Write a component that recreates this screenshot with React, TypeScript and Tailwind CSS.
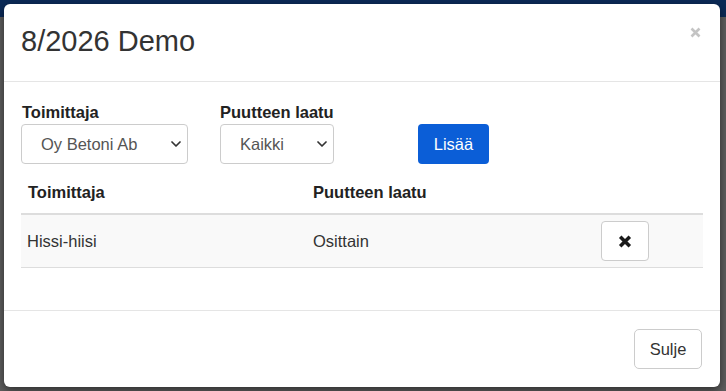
import React from "react";

function Chevron() {
  return (
    <svg width="10" height="6" viewBox="0 0 10 6" fill="none" className="shrink-0">
      <path d="M1 1l4 4 4-4" stroke="#333" strokeWidth="1.7" strokeLinecap="round" strokeLinejoin="round" />
    </svg>
  );
}

function FakeSelect({ value, width }: { value: string; width: string }) {
  return (
    <div
      className={`${width} flex h-[40px] items-center justify-between rounded-[4px] border border-[#cccccc] bg-white pl-[19px] pr-[6px] text-[16.5px] text-[#555555]`}
    >
      <span className="leading-[22px]">{value}</span>
      <Chevron />
    </div>
  );
}

export default function App() {
  return (
    <div
      className="h-[391px] w-[726px] overflow-hidden bg-[linear-gradient(to_bottom,#0b2a57_0px,#0b2a57_17px,#5d5d5d_17px,#5d5d5d_100%)] pl-[4px] pt-[4px]"
      style={{ fontFamily: '"Liberation Sans", Arial, sans-serif' }}
    >
      <div className="flex h-[383px] w-[716px] flex-col rounded-[6px] bg-white shadow-[0_3px_9px_rgba(0,0,0,0.5)]">
        {/* Header */}
        <div className="flex h-[78px] shrink-0 items-start justify-between border-b border-[#e5e5e5] pl-[17px] pr-[19px]">
          <h4 className="mt-[22px] text-[29px] font-normal leading-[31px] text-[#333333]">8/2026 Demo</h4>
          <svg width="11" height="11" viewBox="0 0 11 11" className="mt-[23px]">
            <path d="M1.5 1.5l8 8M9.5 1.5l-8 8" stroke="#c4c4c4" strokeWidth="2.6" />
          </svg>
        </div>

        {/* Body */}
        <div className="px-[17px] pb-[42px] pt-[19px] text-[#333333]">
          <div className="flex items-end">
            <div className="flex flex-col">
              <label className="mb-[1px] pl-[1px] text-[16.5px] font-bold leading-[22px] text-[#222222]">Toimittaja</label>
              <FakeSelect value="Oy Betoni Ab" width="w-[167px]" />
            </div>
            <div className="ml-[32px] flex flex-col">
              <label className="mb-[1px] text-[16.5px] font-bold leading-[22px] text-[#222222]">Puutteen laatu</label>
              <FakeSelect value="Kaikki" width="w-[114px]" />
            </div>
            <button className="ml-[84px] h-[40px] w-[71px] rounded-[4px] bg-[#0b5ed7] text-[16.5px] text-white">
              Lisää
            </button>
          </div>

          <div className="mt-[8px]">
            <div className="grid h-[43px] grid-cols-[285px_288px_1fr] items-center border-b-2 border-[#dddddd] text-[16.5px] font-bold text-[#222222]">
              <div className="pl-[7px]">Toimittaja</div>
              <div className="pl-[7px]">Puutteen laatu</div>
              <div />
            </div>
            <div className="grid h-[53px] grid-cols-[285px_288px_1fr] items-center border-b border-[#dddddd] bg-[#f9f9f9] text-[16.5px] text-[#333333]">
              <div className="pl-[6px]">Hissi-hiisi</div>
              <div className="pl-[7px]">Osittain</div>
              <div className="pl-[7px]">
                <button className="flex h-[40px] w-[48px] items-center justify-center rounded-[4px] border border-[#cccccc] bg-white">
                  <svg width="14" height="13" viewBox="0 0 14 13">
                    <path d="M2.2 1.8l9.6 9.4M11.8 1.8l-9.6 9.4" stroke="#1a1a1a" strokeWidth="3.6" />
                  </svg>
                </button>
              </div>
            </div>
          </div>
        </div>

        {/* Footer */}
        <div className="flex justify-end border-t border-[#e5e5e5] pb-[18px] pr-[18px] pt-[18px]">
          <button className="h-[40px] w-[68px] rounded-[5px] border border-[#cccccc] bg-white text-[16.5px] text-[#333333]">
            Sulje
          </button>
        </div>
      </div>
    </div>
  );
}
